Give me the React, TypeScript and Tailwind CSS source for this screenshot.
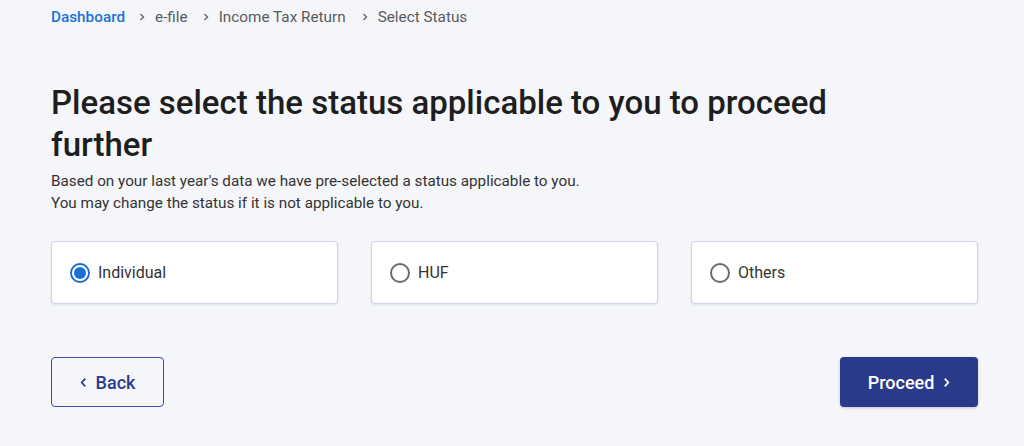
import React from "react";

const Chevron = ({ className = "" }: { className?: string }) => (
  <svg viewBox="0 0 8 10" className={className} fill="none" stroke="currentColor" strokeWidth="1.4">
    <path d="M2.5 2 L5.5 5 L2.5 8" />
  </svg>
);

const Radio = ({ checked }: { checked?: boolean }) =>
  checked ? (
    <span className="w-[20px] h-[20px] rounded-full border-2 border-[#1a6fd6] flex items-center justify-center">
      <span className="w-[12px] h-[12px] rounded-full bg-[#1a6fd6]" />
    </span>
  ) : (
    <span className="w-[20px] h-[20px] rounded-full border-2 border-[#6b6b6b]" />
  );

const Card = ({ label, checked }: { label: string; checked?: boolean }) => (
  <div className="w-[287px] h-[63px] bg-white border border-[#cfd2ec] rounded-[4px] shadow-[0_1px_2px_rgba(60,70,150,0.12)] flex items-center pl-[18px] gap-[8px]">
    <Radio checked={checked} />
    <span className="text-[16px] text-[#333333] mt-[1px]">{label}</span>
  </div>
);

export default function App() {
  return (
    <div
      className="w-[1024px] h-[446px] bg-[#f5f6fa] pl-[51px] pt-[7px]"
      style={{ fontFamily: "Roboto, 'Liberation Sans', sans-serif" }}
    >
      <div className="flex items-center h-[20px] text-[15.3px] text-[#5a5a5a]">
        <span className="text-[#1a73d8] font-medium">Dashboard</span>
        <Chevron className="w-[8px] h-[10px] ml-[13px] mr-[9px] text-[#666]" />
        <span>e-file</span>
        <Chevron className="w-[8px] h-[10px] ml-[14px] mr-[9px] text-[#666]" />
        <span>Income Tax Return</span>
        <Chevron className="w-[8px] h-[10px] ml-[15px] mr-[9px] text-[#666]" />
        <span>Select Status</span>
      </div>

      <h1 className="mt-[55px] max-w-[840px] text-[33px] leading-[42px] font-medium text-[#1e1e1e]">
        Please select the status applicable to you to proceed further
      </h1>
      <p className="mt-[4px] text-[15.25px] leading-[22px] text-[#333333]">
        Based on your last year's data we have pre-selected a status applicable to you.
        <br />
        You may change the status if it is not applicable to you.
      </p>

      <div className="mt-[27px] w-[927px] flex justify-between">
        <Card label="Individual" checked />
        <Card label="HUF" />
        <Card label="Others" />
      </div>

      <div className="mt-[53px] w-[927px] flex justify-between">
        <button className="w-[113px] h-[50px] border border-[#3c4ba3] rounded-[4px] flex items-center justify-center gap-[9px] text-[18px] font-medium text-[#2c3b8f] bg-transparent">
          <svg viewBox="0 0 8 12" className="w-[7px] h-[11px]" fill="none" stroke="currentColor" strokeWidth="2">
            <path d="M6 1.5 L2 6 L6 10.5" />
          </svg>
          Back
        </button>
        <button className="w-[138px] h-[50px] rounded-[4px] bg-[#293a8b] flex items-center justify-center gap-[9px] text-[18px] font-medium text-white shadow-[0_1px_3px_rgba(0,0,0,0.2)]">
          Proceed
          <svg viewBox="0 0 8 12" className="w-[7px] h-[11px]" fill="none" stroke="currentColor" strokeWidth="2">
            <path d="M2 1.5 L6 6 L2 10.5" />
          </svg>
        </button>
      </div>
    </div>
  );
}
